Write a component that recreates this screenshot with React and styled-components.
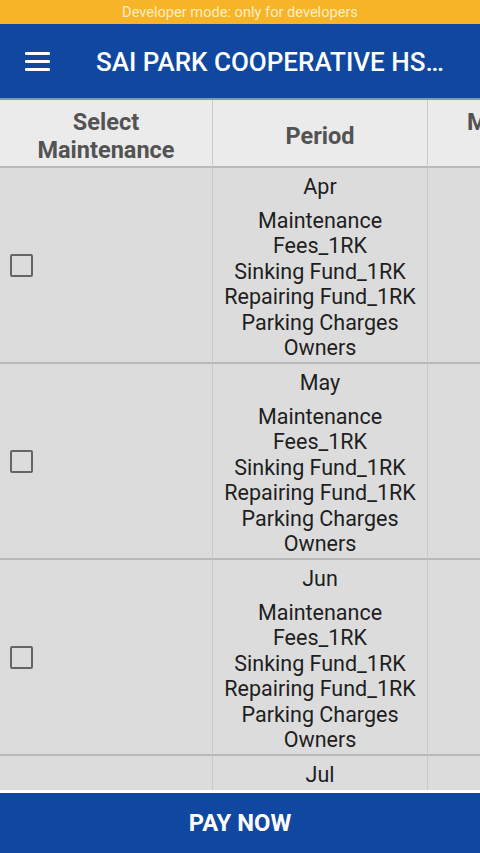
import React from 'react';
import styled, { createGlobalStyle } from 'styled-components';

const GlobalStyle = createGlobalStyle`
  html, body {
    margin: 0;
    padding: 0;
    background: #ffffff;
  }
  body {
    font-family: Roboto, "Liberation Sans", Arial, sans-serif;
  }
`;

const Screen = styled.div`
  width: 480px;
  height: 853px;
  display: flex;
  flex-direction: column;
  overflow: hidden;
  background: #ffffff;
`;

const DevBar = styled.div`
  height: 24px;
  flex: none;
  background: #f8b428;
  color: #fdeec6;
  font-size: 14.6px;
  display: flex;
  align-items: center;
  justify-content: center;
`;

const AppBar = styled.div`
  height: 74px;
  flex: none;
  background: #0f47a1;
  border-bottom: 2px solid #7d97c6;
  display: flex;
  align-items: center;
  padding-left: 25px;
  gap: 46px;
  box-sizing: content-box;
`;

const MenuButton = styled.div`
  width: 25px;
  height: 19px;
  display: flex;
  flex-direction: column;
  justify-content: space-between;
  margin-top: 1px;
`;

const MenuLine = styled.span`
  height: 3px;
  background: #ffffff;
  border-radius: 1px;
`;

const Title = styled.div`
  color: #ffffff;
  font-size: 26px;
  font-weight: 500;
  white-space: nowrap;
  overflow: hidden;
  text-overflow: ellipsis;
  max-width: 360px;
  margin-top: 2px;
`;

const TableArea = styled.div`
  flex: 1;
  overflow: hidden;
  background: #dcdcdc;
`;

const Grid = styled.div`
  display: grid;
  grid-template-columns: 213px 215px 215px;
  width: 643px;
`;

const HeadCell = styled.div`
  height: 68px;
  box-sizing: border-box;
  background: #ebebeb;
  border-bottom: 2px solid #b9b9b9;
  border-right: ${p => (p.$last ? 'none' : '1px solid #c9c9c9')};
  display: flex;
  align-items: center;
  justify-content: center;
  text-align: center;
  color: #535353;
  font-weight: 700;
  font-size: 23.5px;
  line-height: 28px;
  padding-top: 5px;
`;

const Cell = styled.div`
  height: 196px;
  box-sizing: border-box;
  border-bottom: 2px solid #b9b9b9;
  border-right: ${p => (p.$last ? 'none' : '1px solid #c9c9c9')};
  background: #dcdcdc;
`;

const CheckCell = styled(Cell)`
  display: flex;
  align-items: center;
  padding-left: 10px;
`;

const Checkbox = styled.span`
  width: 23px;
  height: 23px;
  box-sizing: border-box;
  border: 2.5px solid #656565;
  border-radius: 2px;
`;

const PeriodCell = styled(Cell)`
  text-align: center;
  color: #1e1e1e;
  font-size: 21.5px;
  line-height: 25.4px;
  padding-top: 6px;
  white-space: nowrap;
`;

const Month = styled.div`
  margin-bottom: 8.5px;
`;

const BottomGap = styled.div`
  height: 3px;
  flex: none;
  background: #ffffff;
`;

const PayButton = styled.button`
  height: 60px;
  flex: none;
  border: none;
  background: #0f47a1;
  color: #ffffff;
  font-family: Roboto, "Liberation Sans", Arial, sans-serif;
  font-weight: 700;
  font-size: 23.8px;
  text-transform: uppercase;
  padding: 0;
`;

const fees = [
  'Maintenance',
  'Fees_1RK',
  'Sinking Fund_1RK',
  'Repairing Fund_1RK',
  'Parking Charges',
  'Owners',
];

const months = ['Apr', 'May', 'Jun', 'Jul'];

export default function App() {
  return (
    <>
      <GlobalStyle />
      <Screen>
        <DevBar>Developer mode: only for developers</DevBar>
        <AppBar>
          <MenuButton>
            <MenuLine />
            <MenuLine />
            <MenuLine />
          </MenuButton>
          <Title>SAI PARK COOPERATIVE HSG. SOC. LTD.</Title>
        </AppBar>
        <TableArea>
          <Grid>
            <HeadCell>Select<br />Maintenance</HeadCell>
            <HeadCell>Period</HeadCell>
            <HeadCell $last>Maintenance<br />Amount</HeadCell>
            {months.map(m => (
              <React.Fragment key={m}>
                <CheckCell>
                  <Checkbox />
                </CheckCell>
                <PeriodCell>
                  <Month>{m}</Month>
                  {fees.map(f => (
                    <div key={f}>{f}</div>
                  ))}
                </PeriodCell>
                <Cell $last />
              </React.Fragment>
            ))}
          </Grid>
        </TableArea>
        <BottomGap />
        <PayButton>Pay Now</PayButton>
      </Screen>
    </>
  );
}
